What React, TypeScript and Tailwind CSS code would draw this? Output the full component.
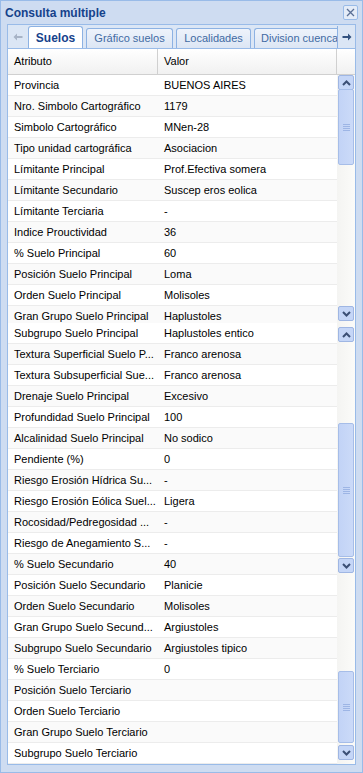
import React from 'react';

type Row = [string, string];

const part1: Row[] = [
    ['Provincia', 'BUENOS AIRES'],
    ['Nro. Simbolo Cartográfico', '1179'],
    ['Simbolo Cartográfico', 'MNen-28'],
    ['Tipo unidad cartográfica', 'Asociacion'],
    ['Límitante Principal', 'Prof.Efectiva somera'],
    ['Límitante Secundario', 'Suscep eros eolica'],
    ['Límitante Terciaria', '-'],
    ['Indice Prouctividad', '36'],
    ['% Suelo Principal', '60'],
    ['Posición Suelo Principal', 'Loma'],
    ['Orden Suelo Principal', 'Molisoles'],
    ['Gran Grupo Suelo Principal', 'Haplustoles'],
];

const part2: Row[] = [
    ['Subgrupo Suelo Principal', 'Haplustoles entico'],
    ['Textura Superficial Suelo P...', 'Franco arenosa'],
    ['Textura Subsuperficial Sue...', 'Franco arenosa'],
    ['Drenaje Suelo Principal', 'Excesivo'],
    ['Profundidad Suelo Principal', '100'],
    ['Alcalinidad Suelo Principal', 'No sodico'],
    ['Pendiente (%)', '0'],
    ['Riesgo Erosión Hídrica Su...', '-'],
    ['Riesgo Erosión Eólica Suel...', 'Ligera'],
    ['Rocosidad/Pedregosidad ...', '-'],
    ['Riesgo de Anegamiento S...', '-'],
    ['% Suelo Secundario', '40'],
];

const part3: Row[] = [
    ['Posición Suelo Secundario', 'Planicie'],
    ['Orden Suelo Secundario', 'Molisoles'],
    ['Gran Grupo Suelo Secund...', 'Argiustoles'],
    ['Subgrupo Suelo Secundario', 'Argiustoles tipico'],
    ['% Suelo Terciario', '0'],
    ['Posición Suelo Terciario', ''],
    ['Orden Suelo Terciario', ''],
    ['Gran Grupo Suelo Terciario', ''],
    ['Subgrupo Suelo Terciario', ''],
];

const Chevron = ({ up }: { up?: boolean }) => (
    <svg width="9" height="6" viewBox="0 0 9 6">
        <path d={up ? 'M1 5 L4.5 1.5 L8 5' : 'M1 1 L4.5 4.5 L8 1'} fill="none" stroke="#3b4f75" strokeWidth="2" />
    </svg>
);

const ArrowBtn = ({ up }: { up?: boolean }) => (
    <div className="h-[15px] w-[16px] flex items-center justify-center bg-[#c5d6f7] border border-[#9fb6e3] rounded-[2px]">
        <Chevron up={up} />
    </div>
);

// scroll column, thumb given by px offsets inside the section
const Scroll = ({ upAt, downAt, thumb }: { upAt?: number; downAt?: number; thumb?: [number, number] }) => (
    <div className="relative w-[18px] shrink-0 bg-gradient-to-r from-[#f4f4f2] to-[#fbfbf9]">
        {upAt !== undefined && (
            <div className="absolute left-[1px]" style={{ top: upAt }}>
                <ArrowBtn up />
            </div>
        )}
        {thumb && (
            <div
                className="absolute left-[1px] w-[16px] bg-gradient-to-r from-[#c2d3f6] to-[#cbdaf8] border border-[#a6bde8] rounded-[2px] flex items-center justify-center"
                style={{ top: thumb[0], height: thumb[1] - thumb[0] }}
            >
                <div className="flex flex-col gap-[1px]">
                    <div className="w-[7px] h-[1px] bg-[#9db5e5]" />
                    <div className="w-[7px] h-[1px] bg-[#9db5e5]" />
                    <div className="w-[7px] h-[1px] bg-[#9db5e5]" />
                    <div className="w-[7px] h-[1px] bg-[#9db5e5]" />
                </div>
            </div>
        )}
        {downAt !== undefined && (
            <div className="absolute left-[1px]" style={{ top: downAt }}>
                <ArrowBtn />
            </div>
        )}
    </div>
);

const Rows = ({ rows }: { rows: Row[] }) => (
    <div className="flex-1 flex flex-col">
        {rows.map(([k, v], i) => (
            <div
                key={k}
                className={`h-[21px] shrink-0 flex items-center border-b border-[#ececec] ${i % 2 ? 'bg-[#fafafa]' : 'bg-white'}`}
            >
                <div className="w-[150px] pl-[6px] truncate">{k}</div>
                <div className="flex-1 pl-[6px] truncate">{v}</div>
            </div>
        ))}
    </div>
);

const tabCls =
    'h-[20px] flex items-center justify-center bg-gradient-to-b from-[#eef3fb] to-[#dce6f4] border-x border-t border-[#8db2e3] rounded-t-[3px] text-[#416aa3] whitespace-nowrap shrink-0';

export default function App() {
    return (
        <div
            className="w-[363px] h-[773px] bg-[#cedcf1] border border-[#99bbe8] flex flex-col text-[11px] text-black"
            style={{ fontFamily: '"Liberation Sans", Arial, sans-serif' }}
        >
            {/* Title bar */}
            <div className="h-[23px] shrink-0 flex items-center justify-between pl-[4px] pr-[4px]">
                <span className="text-[12px] font-bold text-[#15428b]">Consulta múltiple</span>
                <div className="w-[15px] h-[15px] flex items-center justify-center border border-[#99bbe8] bg-[#e4ecf8] rounded-[2px]">
                    <svg width="9" height="9" viewBox="0 0 9 9">
                        <path d="M1 1 L8 8 M8 1 L1 8" stroke="#5a6f95" strokeWidth="1.3" />
                    </svg>
                </div>
            </div>

            {/* Tab strip */}
            <div className="mx-[6px] h-[24px] shrink-0 flex items-end bg-[#dbe6f5] border-x border-t border-[#99bbe8]">
                <div className="w-[20px] h-[22px] shrink-0 flex items-center justify-center">
                    <svg width="10" height="8" viewBox="0 0 10 8">
                        <path d="M4 0.5 L0.5 4 L4 7.5 Z M4 3 H9.5 V5 H4 Z" fill="#a7b3c6" />
                    </svg>
                </div>
                <div className="flex items-end gap-[3px] flex-1 overflow-hidden">
                    <div className="w-[55px] h-[22px] shrink-0 flex items-center justify-center bg-white border-x border-t border-[#8db2e3] rounded-t-[3px] font-bold text-[12px] text-[#15428b]">
                        Suelos
                    </div>
                    <div className={`${tabCls} w-[87px]`}>Gráfico suelos</div>
                    <div className={`${tabCls} w-[75px]`}>Localidades</div>
                    <div className="h-[20px] flex-1 flex items-center pl-[6px] bg-gradient-to-b from-[#eef3fb] to-[#dce6f4] border-l border-t border-[#8db2e3] rounded-tl-[3px] text-[#416aa3] whitespace-nowrap overflow-hidden">
                        Division cuencas
                    </div>
                </div>
                <div className="w-[18px] h-[22px] shrink-0 flex items-center justify-center bg-[#dbe6f5] border-l border-[#8db2e3]">
                    <svg width="10" height="8" viewBox="0 0 10 8">
                        <path d="M6 0.5 L9.5 4 L6 7.5 Z M0.5 3 H6 V5 H0.5 Z" fill="#33527f" />
                    </svg>
                </div>
            </div>

            {/* Grid */}
            <div className="mx-[6px] flex-1 flex flex-col border border-[#99bbe8] bg-white mb-[7px] overflow-hidden">
                {/* header */}
                <div className="h-[26px] shrink-0 flex items-center bg-gradient-to-b from-white to-[#f1f1f1] border-b border-[#d0d0d0]">
                    <div className="w-[150px] h-full flex items-center pl-[6px] border-r border-[#d0d0d0]">Atributo</div>
                    <div className="flex-1 h-full flex items-center pl-[6px] border-r border-[#d0d0d0]">Valor</div>
                    <div className="w-[18px]" />
                </div>
                <div className="flex h-[248px] shrink-0 overflow-hidden">
                    <Rows rows={part1} />
                    <Scroll upAt={0} thumb={[14, 90]} downAt={231} />
                </div>
                <div className="flex h-[252px] shrink-0 overflow-hidden">
                    <Rows rows={part2} />
                    <Scroll upAt={4} thumb={[100, 234]} downAt={235} />
                </div>
                <div className="flex flex-1 overflow-hidden">
                    <Rows rows={part3} />
                    <Scroll thumb={[96, 168]} downAt={170} />
                </div>
            </div>
        </div>
    );
}
